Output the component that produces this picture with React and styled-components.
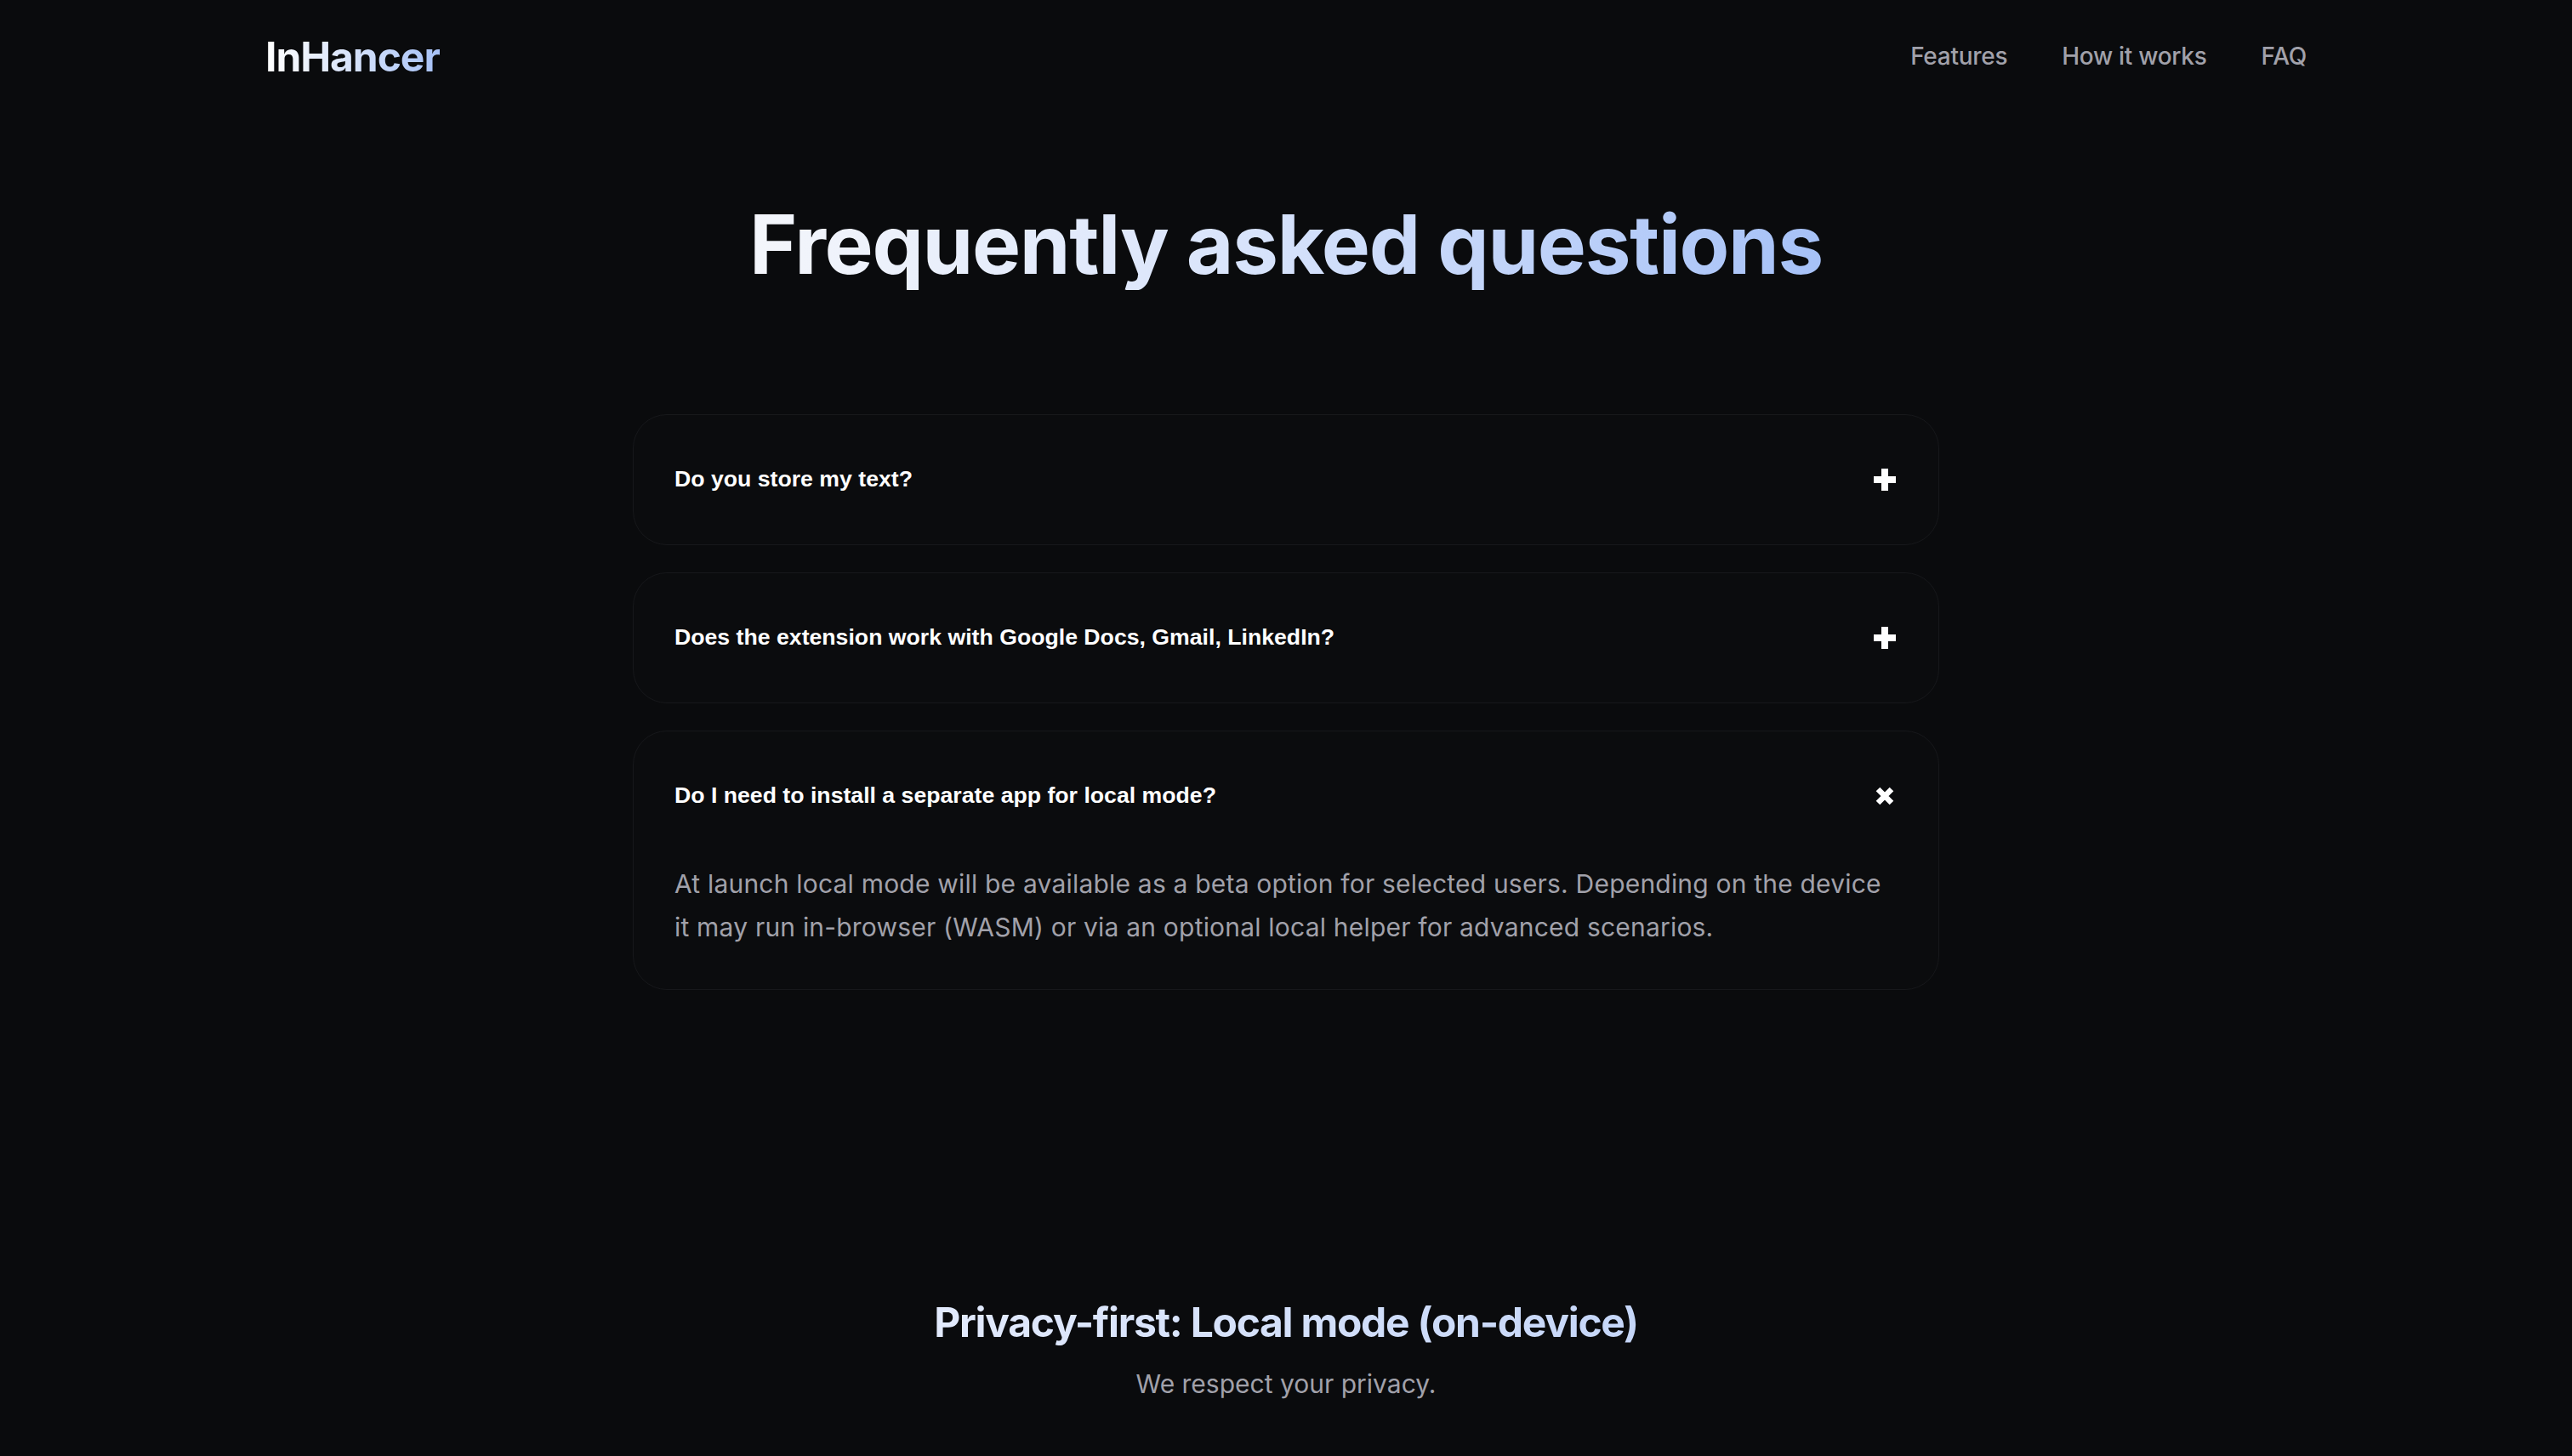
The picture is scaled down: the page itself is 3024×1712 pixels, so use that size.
import React, { useState } from "react";
import styled, { createGlobalStyle } from "styled-components";

const Global = createGlobalStyle`
  html, body { margin: 0; padding: 0; background: #0a0b0d; }
  body { font-family: Inter, "Noto Sans", sans-serif; color: #f4f4f5; min-height: 100vh; }
  * { box-sizing: border-box; }
`;

const Page = styled.div`
  min-height: 100vh;
  background: #0a0b0d;
`;

const Header = styled.header`
  max-width: 2400px;
  margin: 0 auto;
  height: 132px;
  display: flex;
  align-items: center;
  justify-content: space-between;
`;

const Logo = styled.div`
  font-size: 48px;
  font-weight: 700;
  letter-spacing: -0.022em;
  line-height: 1;
  background: linear-gradient(90deg, #ffffff 0%, #dfe8fb 40%, #a6c1f7 100%);
  -webkit-background-clip: text;
  background-clip: text;
  color: transparent;
  padding-top: 2px;
`;

const Nav = styled.nav`
  display: flex;
  gap: 64px;
  align-items: center;
`;

const NavLink = styled.a`
  font-size: 28px;
  font-weight: 500;
  letter-spacing: -0.01em;
  color: #a1a1aa;
  text-decoration: none;
  line-height: 1;
`;

const Section = styled.section`
  display: flex;
  flex-direction: column;
  align-items: center;
  padding-top: 103px;
`;

const Title = styled.h1`
  margin: 0 0 146px;
  font-size: 96px;
  font-weight: 700;
  letter-spacing: -0.014em;
  line-height: 1.1;
  background: linear-gradient(90deg, #f4f6fb 0%, #d9e4fb 45%, #a6c1f7 100%);
  -webkit-background-clip: text;
  background-clip: text;
  color: transparent;
`;

const List = styled.div`
  width: 1536px;
  display: flex;
  flex-direction: column;
  gap: 32px;
`;

const Card = styled.div`
  border: 1px solid #17181b;
  border-radius: 40px;
  background: #0b0c0e;
`;

const Question = styled.button`
  width: 100%;
  height: 152px;
  padding: 0 48px;
  display: flex;
  align-items: center;
  justify-content: space-between;
  background: transparent;
  border: 0;
  cursor: pointer;
  color: #ffffff;
  font-family: "Liberation Sans", Arial, sans-serif;
  font-size: 26.67px;
  font-weight: 700;
  text-align: left;
`;

const IconBox = styled.span`
  width: 30px;
  height: 30px;
  display: flex;
  align-items: center;
  justify-content: center;
  margin-right: 0px;
`;

const Answer = styled.p`
  margin: 0;
  padding: 2px 48px 47px;
  font-size: 30px;
  line-height: 51px;
  letter-spacing: 0.2px;
  color: #a1a1aa;
`;

const Privacy = styled.section`
  display: flex;
  flex-direction: column;
  align-items: center;
  padding-top: 362px;
  padding-bottom: 60px;
`;

const PrivacyTitle = styled.h2`
  margin: 0 0 22px;
  font-size: 48px;
  font-weight: 700;
  letter-spacing: -0.027em;
  line-height: 1.2;
  background: linear-gradient(90deg, #e2eafc 0%, #c5d6f8 100%);
  -webkit-background-clip: text;
  background-clip: text;
  color: transparent;
`;

const PrivacyText = styled.p`
  margin: 0;
  font-size: 30px;
  line-height: 1.5;
  color: #a1a1aa;
`;

const PlusIcon = () => (
  <svg width="26" height="26" viewBox="0 0 26 26">
    <rect x="9" y="0" width="8" height="26" fill="#fff" />
    <rect x="0" y="9" width="26" height="8" fill="#fff" />
  </svg>
);

const CloseIcon = () => (
  <svg width="22" height="22" viewBox="0 0 22 22">
    <path d="M3 3 L19 19 M19 3 L3 19" stroke="#fff" strokeWidth="6.5" />
  </svg>
);

const faqs = [
  { q: "Do you store my text?", a: "" },
  { q: "Does the extension work with Google Docs, Gmail, LinkedIn?", a: "" },
  {
    q: "Do I need to install a separate app for local mode?",
    a: "At launch local mode will be available as a beta option for selected users. Depending on the device it may run in-browser (WASM) or via an optional local helper for advanced scenarios.",
  },
];

export default function App() {
  const [open, setOpen] = useState(2);
  return (
    <Page>
      <Global />
      <Header>
        <Logo>InHancer</Logo>
        <Nav>
          <NavLink href="#features">Features</NavLink>
          <NavLink href="#how">How it works</NavLink>
          <NavLink href="#faq">FAQ</NavLink>
        </Nav>
      </Header>
      <Section id="faq">
        <Title>Frequently asked questions</Title>
        <List>
          {faqs.map((f, i) => (
            <Card key={i}>
              <Question onClick={() => setOpen(open === i ? -1 : i)}>
                <span>{f.q}</span>
                <IconBox>{open === i ? <CloseIcon /> : <PlusIcon />}</IconBox>
              </Question>
              {open === i && f.a && <Answer>{f.a}</Answer>}
            </Card>
          ))}
        </List>
      </Section>
      <Privacy>
        <PrivacyTitle>Privacy-first: Local mode (on-device)</PrivacyTitle>
        <PrivacyText>We respect your privacy.</PrivacyText>
      </Privacy>
    </Page>
  );
}
